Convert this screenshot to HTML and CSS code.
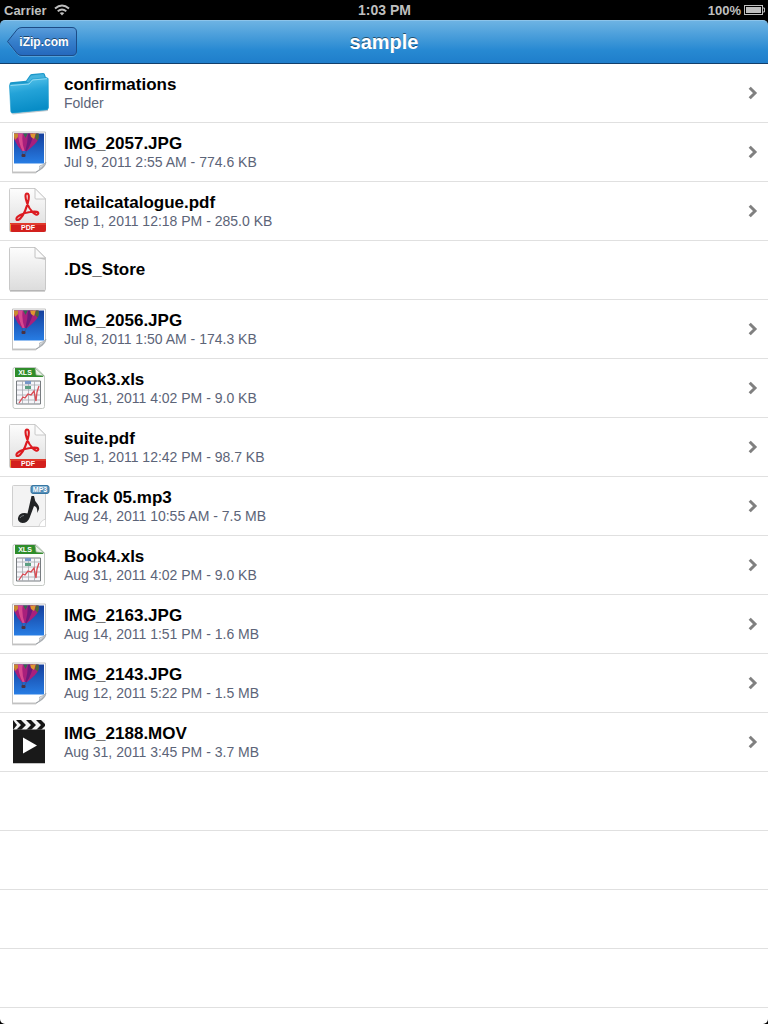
FILE: index.html
```html
<!DOCTYPE html>
<html lang="en">
<head>
    <meta charset="UTF-8" />
    <meta name="viewport" content="width=device-width, initial-scale=1.0" />
    <title>sample</title>
    <link rel="stylesheet" href="styles.css">
</head>
<body>
    <!-- Shared icons -->
    <svg class="sprite" aria-hidden="true">
        <defs>
            <linearGradient id="folderBlue" x1="0" y1="0" x2="0.2" y2="1">
                <stop offset="0" stop-color="#62cbee" />
                <stop offset="0.45" stop-color="#24a3d8" />
                <stop offset="1" stop-color="#078cc6" />
            </linearGradient>
            <linearGradient id="paper" x1="0" y1="0" x2="0" y2="1">
                <stop offset="0" stop-color="#fdfdfd" />
                <stop offset="1" stop-color="#dcdcdc" />
            </linearGradient>
            <linearGradient id="sky" x1="0" y1="0" x2="0" y2="1">
                <stop offset="0" stop-color="#153f9c" />
                <stop offset="1" stop-color="#277de4" />
            </linearGradient>
            <linearGradient id="fold" x1="0" y1="0" x2="1" y2="1">
                <stop offset="0" stop-color="#ffffff" />
                <stop offset="0.45" stop-color="#e6e8ea" />
                <stop offset="0.6" stop-color="#a9adb1" />
                <stop offset="1" stop-color="#e8e8e8" />
            </linearGradient>
            <linearGradient id="backBlue" x1="0" y1="0" x2="0" y2="1">
                <stop offset="0" stop-color="#5a9ddb" />
                <stop offset="0.5" stop-color="#367fcb" />
                <stop offset="1" stop-color="#2468bd" />
            </linearGradient>
            <clipPath id="clapperTop">
                <rect x="5" y="2" width="32" height="10" />
            </clipPath>
            <clipPath id="balloonClip">
                <path d="M6 5.5H30.500Q32 11 27 16Q23 20 19 23H14Q9 18 6 11z" />
            </clipPath>
        </defs>

        <symbol id="icon-folder" viewBox="0 0 42 48">
            <path d="M3 44.5L40 40.5V42L5 45.5z" fill="#c5cbd0" />
            <path d="M1.5 15L2.5 13.3L18 11.7L22 6Q22.700 5.200 24 5L35 4Q36.300 4 36.800 5L37.800 8L40.300 9.500L40.500 39L39.500 41L4 44z" fill="#1b97c9" />
            <path d="M18.500 12.500L23 6.500L35.500 5L37 9L25 10.500L21 14z" fill="#45b4de" />
            <path d="M1.500 17Q1.500 15.500 3 15.300L20.500 14L24 10L38.500 8.700Q40 8.700 40 10L40.300 38.500Q40.300 40.300 38.500 40.500L4.500 44Q3 44 2.800 42.500z" fill="url(#folderBlue)" stroke="#1a9bcc" stroke-width="0.6" />
            <path d="M2.500 16.500L21 15L24.500 11L39 9.700" fill="none" stroke="#a6e1f5" stroke-width="0.8" />
        </symbol>

        <symbol id="icon-image" viewBox="0 0 42 48">
            <path d="M4.500 4H37.500V35L29 44H4.500z" fill="#fff" stroke="#c4c4c4" />
            <path d="M4 44.800H28" stroke="#b5b5b5" />
            <path d="M6 5.500H36V35.500H6z" fill="url(#sky)" />
            <g clip-path="url(#balloonClip)">
                <path d="M5 4H34V24H5z" fill="#a81f7c" />
                <path d="M10 4Q10 14 15 24H17Q13 14 15 4z" fill="#d8488f" />
                <path d="M20 4Q20 14 17 24H18Q25 14 25 4z" fill="#6d1a7c" />
                <path d="M5 5H10L10 9L7 12z" fill="#c98a30" />
                <path d="M15 5H20L17.500 10z" fill="#2f6e50" />
                <path d="M22 5H28L26 11L23 9z" fill="#e0962f" />
                <path d="M28 5H33L30 13L27 10z" fill="#4c6b35" />
            </g>
            <path d="M14 23L14.500 26M18.500 23L17 26" stroke="#4a4a80" stroke-width="0.8" />
            <rect x="13.500" y="26" width="4" height="3" rx="1" fill="#4b3240" />
            <path d="M28 44Q33 42 31.500 38Q36 37 38 34Q37.500 40 28 44z" fill="url(#fold)" stroke="#9da3a9" stroke-width="0.7" />
        </symbol>

        <symbol id="icon-blank" viewBox="0 0 42 48">
            <path d="M2.500 1.500H27L37.500 12V43.500Q37.500 44.500 36.500 44.500H2.500Q1.500 44.500 1.500 43.500V2.500Q1.500 1.500 2.500 1.500z" fill="url(#paper)" stroke="#c8c8c8" />
            <path d="M2 45H37" stroke="#a5a5a5" />
            <path d="M27 2V11.500L37 14V12z" fill="#c9c9c9" />
            <path d="M27 1.500L37.500 12H28Q27 12 27 11z" fill="#fbfbfb" stroke="#b5b5b5" stroke-width="0.8" />
        </symbol>

        <symbol id="icon-pdf" viewBox="0 0 42 48">
            <path d="M2.500 1.500H27L37.500 12V44.500H2.500Q1.500 44.500 1.500 43.500V2.500Q1.500 1.500 2.500 1.500z" fill="url(#paper)" stroke="#cccccc" />
            <path d="M27 1.500L37.500 12H28Q27 12 27 11z" fill="#fbfbfb" stroke="#bdbdbd" stroke-width="0.8" />
            <path d="M19 6.500C22.500 6.500 20.500 16 17 24C14 31 10 34.500 8.500 32.500C7.500 29.500 15 26 22 25C28 24 31.500 25 30 27C28 30 21.500 23 19 16C17 10.500 17 6.500 19 6.500z" fill="none" stroke="#dc1a20" stroke-width="2.1" stroke-linejoin="round" />
            <path d="M2 36H38V43Q38 45 36 45H4Q2 45 2 43z" fill="#d3201d" />
            <path d="M2 36H38V38H2z" fill="#e03a2c" />
            <path d="M2.500 37V44" stroke="#f19a35" />
        </symbol>

        <symbol id="icon-xls" viewBox="0 0 42 48">
            <path d="M7 3.500H28L36.500 12V42.500Q36.500 44.500 34.500 44.500H7Q5 44.500 5 42.500V5.500Q5 3.500 7 3.500z" fill="#fdfdfd" stroke="#c4c8c4" />
            <path d="M7 4H27Q28 10 35 11.500L35 13H7z" fill="#2f8d2b" />
            <path d="M27 4L36 12L28 11z" fill="#eaf2e8" stroke="#79a476" stroke-width="0.7" />
            <path d="M8.500 17H32.500V40H8.500z" fill="#f6f6fa" stroke="#777c80" />
            <path d="M14.500 17V40M20.500 17V40M26.500 17V40M9 21H32M9 26H32M9 31H32M9 36H32" stroke="#a6aaae" stroke-width="0.8" />
            <path d="M17 17H23V20H17z" fill="#7897c7" />
            <path d="M17 22H23V25H17z" fill="#5c9f83" />
            <path d="M11 39L15 33L17 34L20 30L23 31L26 27L28 37L29 28L31 22" fill="none" stroke="#d84b54" stroke-width="1.3" />
        </symbol>

        <symbol id="icon-mp3" viewBox="0 0 42 48">
            <path d="M5.500 3.500H36.500Q37.500 3.500 37.500 4.500V37L31 44.500H5.500Q4.500 44.500 4.500 43.500V4.500Q4.500 3.500 5.500 3.500z" fill="#f3f3f3" stroke="#cfcfcf" />
            <path d="M31 44.500Q32 39 37.500 37V44.500z" fill="#fff" stroke="#ccc" stroke-width="0.7" />
            <path d="M23.500 14H26Q26.500 19 29.500 22Q33 26 29 31Q30 25 26 24L21.500 36Q19.500 41 14.500 41Q9.500 40 10 36Q11 31 16.500 31Q18.500 31 19.500 31.500z" fill="#222426" />
            <path d="M12 36Q13 33.500 16 33.500" fill="none" stroke="#74797d" />
            <rect x="23" y="3.500" width="18" height="8" rx="2" fill="#578fb8" stroke="#3776a2" />
            <path d="M25 4.500H39" stroke="#8ebbd8" />
        </symbol>

        <symbol id="icon-movie" viewBox="0 0 42 48">
            <rect x="5" y="12" width="32" height="33" fill="#191919" />
            <rect x="5" y="2" width="32" height="10" fill="#f4f4f4" />
            <g clip-path="url(#clapperTop)" fill="#151515">
                <path d="M5 2L9 7L5 12H1V2z" />
                <path d="M8 2H13L18 7L13 12H8L13 7z" />
                <path d="M18 2H23L28 7L23 12H18L23 7z" />
                <path d="M28 2H33L38 7L33 12H28L33 7z" />
            </g>
            <path d="M5 11.500H37" stroke="#555" stroke-width="0.7" />
            <path d="M15 19.500L29 27.500L15 35.500z" fill="#fff" />
            <path d="M5 45.500H37" stroke="#aaa" stroke-width="0.7" />
        </symbol>

        <symbol id="icon-chevron" viewBox="0 0 10 14">
            <path d="M1.700 1.700L7 7L1.700 12.300" fill="none" stroke="#808080" stroke-width="3" />
        </symbol>
    </svg>

    <div class="screen">
        <div class="status-bar">
            <div class="status-left">
                <span>Carrier</span>
                <svg class="wifi" viewBox="0 0 16 12" aria-hidden="true">
                    <path d="M1 4.500Q8 -1.500 15 4.500" fill="none" stroke="#bfbfbf" stroke-width="2" />
                    <path d="M3.700 7.300Q8 3.700 12.300 7.300" fill="none" stroke="#bfbfbf" stroke-width="1.8" />
                    <path d="M5.700 9Q8 7.300 10.300 9L8 11.500z" fill="#bfbfbf" />
                </svg>
            </div>
            <span class="status-time">1:03 PM</span>
            <div class="status-right">
                <span>100%</span>
                <svg class="battery" viewBox="0 0 21 10" aria-hidden="true">
                    <rect x="0.500" y="0.500" width="18" height="9" fill="none" stroke="#bfbfbf" />
                    <rect x="2" y="2" width="15" height="6" fill="#bfbfbf" />
                    <path d="M19 3H20.500V7H19" fill="none" stroke="#bfbfbf" />
                </svg>
            </div>
        </div>

        <header class="nav-bar">
            <button type="button" class="back-button">
                <svg class="back-shape" viewBox="0 0 70 30" aria-hidden="true">
                    <path d="M1 16L11 3Q13 1.500 15 1.500H65Q69.500 1.500 69.500 6V25Q69.500 29.500 65 29.500H15Q13 29.500 11 28z" fill="none" stroke="#67aee2" stroke-opacity="0.7" />
                    <path d="M0.500 14.500L10.500 2Q12.500 0.500 15 0.500H65Q69.500 0.500 69.500 5V24Q69.500 28.500 65 28.500H15Q12.500 28.500 10.500 27z" fill="url(#backBlue)" stroke="#1c4c86" />
                </svg>
                <span>iZip.com</span>
            </button>
            <h1>sample</h1>
        </header>

        <main class="files">
            <ul class="file-list">
                <li><a href="#" class="file">
                    <svg class="file-icon" viewBox="0 0 42 48" aria-hidden="true"><use href="#icon-folder" /></svg>
                    <span class="file-text"><strong>confirmations</strong><small>Folder</small></span>
                    <svg class="chevron" aria-hidden="true"><use href="#icon-chevron" /></svg>
                </a></li>
                <li><a href="#" class="file">
                    <svg class="file-icon" viewBox="0 0 42 48" aria-hidden="true"><use href="#icon-image" /></svg>
                    <span class="file-text"><strong>IMG_2057.JPG</strong><small>Jul 9, 2011 2:55 AM - 774.6 KB</small></span>
                    <svg class="chevron" aria-hidden="true"><use href="#icon-chevron" /></svg>
                </a></li>
                <li><a href="#" class="file">
                    <svg class="file-icon" viewBox="0 0 42 48" aria-hidden="true"><use href="#icon-pdf" /><text class="icon-label" x="20" y="43">PDF</text></svg>
                    <span class="file-text"><strong>retailcatalogue.pdf</strong><small>Sep 1, 2011 12:18 PM - 285.0 KB</small></span>
                    <svg class="chevron" aria-hidden="true"><use href="#icon-chevron" /></svg>
                </a></li>
                <li><div class="file">
                    <svg class="file-icon" viewBox="0 0 42 48" aria-hidden="true"><use href="#icon-blank" /></svg>
                    <span class="file-text"><strong>.DS_Store</strong></span>
                </div></li>
                <li><a href="#" class="file">
                    <svg class="file-icon" viewBox="0 0 42 48" aria-hidden="true"><use href="#icon-image" /></svg>
                    <span class="file-text"><strong>IMG_2056.JPG</strong><small>Jul 8, 2011 1:50 AM - 174.3 KB</small></span>
                    <svg class="chevron" aria-hidden="true"><use href="#icon-chevron" /></svg>
                </a></li>
                <li><a href="#" class="file">
                    <svg class="file-icon" viewBox="0 0 42 48" aria-hidden="true"><use href="#icon-xls" /><text class="icon-label" x="17" y="11">XLS</text></svg>
                    <span class="file-text"><strong>Book3.xls</strong><small>Aug 31, 2011 4:02 PM - 9.0 KB</small></span>
                    <svg class="chevron" aria-hidden="true"><use href="#icon-chevron" /></svg>
                </a></li>
                <li><a href="#" class="file">
                    <svg class="file-icon" viewBox="0 0 42 48" aria-hidden="true"><use href="#icon-pdf" /><text class="icon-label" x="20" y="43">PDF</text></svg>
                    <span class="file-text"><strong>suite.pdf</strong><small>Sep 1, 2011 12:42 PM - 98.7 KB</small></span>
                    <svg class="chevron" aria-hidden="true"><use href="#icon-chevron" /></svg>
                </a></li>
                <li><a href="#" class="file">
                    <svg class="file-icon" viewBox="0 0 42 48" aria-hidden="true"><use href="#icon-mp3" /><text class="icon-label" x="32" y="10">MP3</text></svg>
                    <span class="file-text"><strong>Track 05.mp3</strong><small>Aug 24, 2011 10:55 AM - 7.5 MB</small></span>
                    <svg class="chevron" aria-hidden="true"><use href="#icon-chevron" /></svg>
                </a></li>
                <li><a href="#" class="file">
                    <svg class="file-icon" viewBox="0 0 42 48" aria-hidden="true"><use href="#icon-xls" /><text class="icon-label" x="17" y="11">XLS</text></svg>
                    <span class="file-text"><strong>Book4.xls</strong><small>Aug 31, 2011 4:02 PM - 9.0 KB</small></span>
                    <svg class="chevron" aria-hidden="true"><use href="#icon-chevron" /></svg>
                </a></li>
                <li><a href="#" class="file">
                    <svg class="file-icon" viewBox="0 0 42 48" aria-hidden="true"><use href="#icon-image" /></svg>
                    <span class="file-text"><strong>IMG_2163.JPG</strong><small>Aug 14, 2011 1:51 PM - 1.6 MB</small></span>
                    <svg class="chevron" aria-hidden="true"><use href="#icon-chevron" /></svg>
                </a></li>
                <li><a href="#" class="file">
                    <svg class="file-icon" viewBox="0 0 42 48" aria-hidden="true"><use href="#icon-image" /></svg>
                    <span class="file-text"><strong>IMG_2143.JPG</strong><small>Aug 12, 2011 5:22 PM - 1.5 MB</small></span>
                    <svg class="chevron" aria-hidden="true"><use href="#icon-chevron" /></svg>
                </a></li>
                <li><a href="#" class="file">
                    <svg class="file-icon" viewBox="0 0 42 48" aria-hidden="true"><use href="#icon-movie" /></svg>
                    <span class="file-text"><strong>IMG_2188.MOV</strong><small>Aug 31, 2011 3:45 PM - 3.7 MB</small></span>
                    <svg class="chevron" aria-hidden="true"><use href="#icon-chevron" /></svg>
                </a></li>
            </ul>
            <div class="empty-rows"></div>
        </main>
    </div>
</body>
</html>
```
FILE: styles.css
```css
* {
    box-sizing: border-box;
}
body {
    margin: 0;
    background-color: #000000;
    font-family: "Liberation Sans", Arial, Helvetica, sans-serif;
}
.sprite {
    position: absolute;
    width: 0;
    height: 0;
}
.screen {
    display: flex;
    flex-direction: column;
    min-height: 100vh;
}

/* Status bar */
.status-bar {
    display: grid;
    grid-template-columns: 1fr auto 1fr;
    align-items: center;
    height: 20px;
    padding: 0 3px 0 4px;
    color: #bfbfbf;
    font-size: 13px;
    font-weight: bold;
}
.status-left,
.status-right {
    display: flex;
    align-items: center;
    gap: 7px;
}
.status-right {
    justify-content: flex-end;
    gap: 3px;
}
.status-time {
    font-size: 14px;
}
.wifi {
    width: 16px;
    height: 12px;
}
.battery {
    width: 21px;
    height: 10px;
}

/* Navigation bar */
.nav-bar {
    display: grid;
    grid-template-columns: 1fr auto 1fr;
    align-items: center;
    height: 44px;
    padding: 0 7px;
    border-top: 1px solid #8cc4ea;
    border-bottom: 1px solid #123f6b;
    border-radius: 5px 5px 0 0;
    background: linear-gradient(#6db3e3, #2789d2 70%, #1f7ecb);
}
.nav-bar h1 {
    margin: 0;
    color: #ffffff;
    font-size: 20px;
    line-height: 22px;
    text-shadow: 0 -1px 0 rgba(0, 0, 0, 0.5);
}
.back-button {
    position: relative;
    justify-self: start;
    width: 70px;
    height: 30px;
    padding: 0 8px 0 12px;
    border: none;
    background: none;
    color: #ffffff;
    font-family: inherit;
    font-size: 12px;
    font-weight: bold;
    text-align: center;
    text-shadow: 0 -1px 0 rgba(0, 0, 0, 0.5);
    white-space: nowrap;
    cursor: pointer;
}
.back-shape {
    position: absolute;
    top: 0;
    left: 0;
    width: 100%;
    height: 100%;
}
.back-button span {
    position: relative;
}

/* File list */
.files {
    display: flex;
    flex-direction: column;
    flex: 1;
    background-color: #ffffff;
    border-radius: 0 0 5px 5px;
}
.file-list {
    margin: 0;
    padding: 0;
    list-style: none;
}
.file {
    display: flex;
    align-items: center;
    height: 59px;
    padding: 0 10px 0 8px;
    border-bottom: 1px solid #e0e0e0;
    color: #000000;
    text-decoration: none;
}
a.file:hover {
    background-color: #f3f7fb;
}
.file-icon {
    flex: none;
    width: 42px;
    height: 48px;
    margin-right: 14px;
}
.file-text {
    display: flex;
    flex-direction: column;
    flex: 1;
}
.file-text strong {
    font-size: 17px;
    line-height: 20px;
}
.file-text small {
    color: #5c6478;
    font-size: 14px;
    line-height: 16px;
}
.chevron {
    width: 10px;
    height: 14px;
}
.empty-rows {
    flex: 1;
    background: repeating-linear-gradient(transparent 0 58px, #e0e0e0 58px 59px);
}
.icon-label {
    fill: #ffffff;
    font-family: "Liberation Sans", Arial, sans-serif;
    font-size: 7px;
    font-weight: bold;
    text-anchor: middle;
}
```
